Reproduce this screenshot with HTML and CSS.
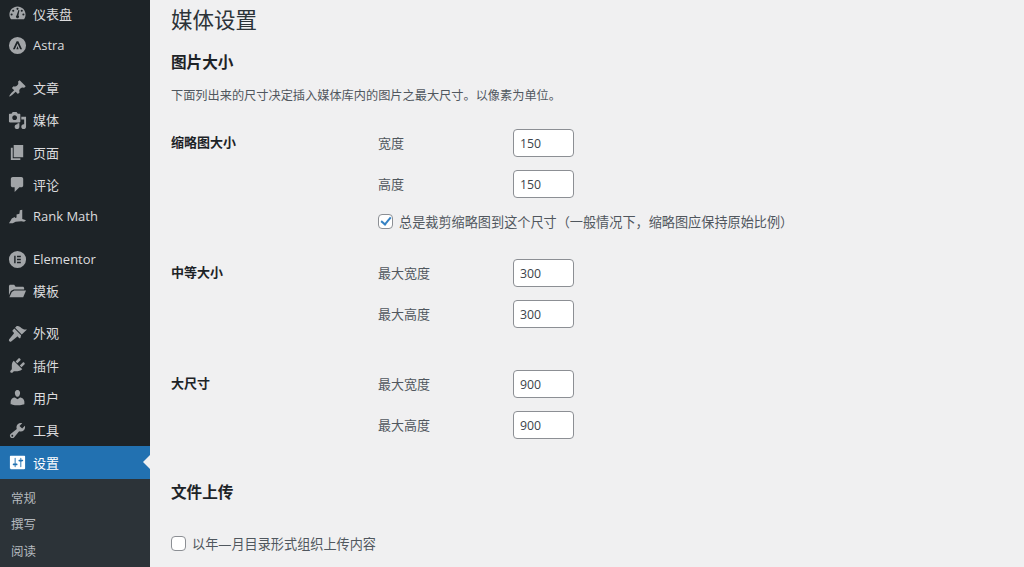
FILE: index.html
```html
<!DOCTYPE html>
<html lang="zh-CN">
<head>
    <meta charset="UTF-8">
    <title>媒体设置</title>
    <link rel="stylesheet" href="styles.css">
</head>
<body>
    <div class="sidebar">
        <ul class="menu">
            <li class="item"><svg viewBox="0 0 20 20"><path fill-rule="evenodd" d="M10 2.500C5.300 2.500 1.500 6.300 1.500 11c0 1.900.6 3.600 1.700 5h13.600c1.100-1.400 1.700-3.100 1.700-5 0-4.700-3.800-8.500-8.500-8.500zM10 4a1.100 1.100 0 1 1 0 2.200A1.100 1.100 0 0 1 10 4zM5.500 6a1.100 1.100 0 1 1 0 2.200 1.100 1.100 0 0 1 0-2.200zm9 0a1.100 1.100 0 1 1 0 2.200 1.100 1.100 0 0 1 0-2.200zM3.800 10a1.100 1.100 0 1 1 0 2.200 1.100 1.100 0 0 1 0-2.200zm12.400 0a1.100 1.100 0 1 1 0 2.200 1.100 1.100 0 0 1 0-2.200zM12 6.500l-1 5.600a1.600 1.600 0 1 1-2 0l2-5.800z"/></svg><span>仪表盘</span></li>
            <li class="item"><svg viewBox="0 0 20 20"><path fill-rule="evenodd" d="M10 1a9 9 0 1 1 0 18 9 9 0 0 1 0-18zM9.100 5.500L5.200 14h2l2.800-6 2.800 6h2L10.900 5.500zM10 10.500l-1.200 3.500h2.400z"/></svg><span>Astra</span></li>
            <li class="sep"></li>
            <li class="item"><svg viewBox="0 0 20 20"><path d="M10.440 3.020l1.820-1.820 6.360 6.350-1.830 1.820c-1.050-.68-2.480-.57-3.410.36l-.75.75c-.92.93-1.040 2.350-.35 3.410l-1.830 1.820-2.410-2.410-2.800 2.790c-.42.42-3.380 2.710-3.800 2.290s1.860-3.390 2.280-3.810l2.790-2.790L4.100 9.360l1.830-1.820c1.050.69 2.480.57 3.400-.36l.75-.75c.93-.92 1.050-2.350.36-3.410z"/></svg><span>文章</span></li>
            <li class="item"><svg viewBox="0 0 20 20"><path fill-rule="evenodd" d="M13 11V4c0-.55-.45-1-1-1h-1.670L9 1H5L3.670 3H2c-.55 0-1 .45-1 1v7c0 .55.45 1 1 1h10c.55 0 1-.45 1-1zM7 4.500c1.380 0 2.500 1.120 2.500 2.500S8.380 9.500 7 9.500 4.500 8.380 4.500 7 5.620 4.500 7 4.500zM14 6h5v10.500c0 1.380-1.120 2.500-2.500 2.500S14 17.880 14 16.500s1.120-2.500 2.500-2.500c.17 0 .34.020.5.050V9h-3V6zm-4 8.050V13h2v3.500c0 1.380-1.120 2.500-2.500 2.500S7 17.880 7 16.500 8.120 14 9.500 14c.17 0 .34.020.5.050z"/></svg><span>媒体</span></li>
            <li class="item"><svg viewBox="0 0 20 20"><path d="M6 15V2h10v13H6zm-1 1h8v2H3V5h2v11z"/></svg><span>页面</span></li>
            <li class="item"><svg viewBox="0 0 20 20"><path d="M5 2h9c1.100 0 2 .9 2 2v7c0 1.100-.9 2-2 2h-2l-5 5v-5H5c-1.100 0-2-.9-2-2V4c0-1.100.9-2 2-2z"/></svg><span>评论</span></li>
            <li class="item"><svg viewBox="0 0 20 20"><path d="M12.500 3.500l2.500-.5v9.500l4 1.500-2 1.500-3-.5-6 .5-3 1.500H1l2-3 1-2 3-1.500.5 1 1.500-.5V8l3-1z"/></svg><span>Rank Math</span></li>
            <li class="sep"></li>
            <li class="item"><svg viewBox="0 0 20 20"><path fill-rule="evenodd" d="M10 1a9 9 0 1 1 0 18 9 9 0 0 1 0-18zM6.500 6v8h1.500V6zm3 0v1.600h4V6zm0 3.200v1.600h4V9.200zm0 3.200V14h4v-1.600z"/></svg><span>Elementor</span></li>
            <li class="item"><svg viewBox="0 0 20 20"><path d="M1 4.500C1 3.700 1.700 3 2.500 3h4L8 5h7.500c.8 0 1.500.7 1.500 1.500V8H6L3 9.500 1 14zM6.500 9H19l-3 7H1.500L4 10.500z"/></svg><span>模板</span></li>
            <li class="sep"></li>
            <li class="item"><svg viewBox="0 0 20 20"><path d="M14.480 11.060L7.410 3.990l1.500-1.500c.5-.56 2.300-.47 3.510.32 1.210.8 1.430 1.280 2.910 2.100 1.180.64 2.450 1.260 4.670.85zm-.71.71L6.700 4.700 4.930 6.470c-.39.39-.39 1.020 0 1.410l1.060 1.060c.39.39.39 1.030 0 1.420l-4.500 5.500c-.7.800-.7 1.800-.1 2.400s1.600.5 2.300-.2l5.500-4.500c.39-.39 1.030-.39 1.420 0l1.060 1.060c.39.39 1.020.39 1.410 0z"/></svg><span>外观</span></li>
            <li class="item"><svg viewBox="0 0 20 20"><path d="M13.110 4.360L9.870 7.600 8 5.730l3.240-3.240c.35-.34 1.050-.2 1.560.32.52.51.66 1.210.31 1.550zm-8 1.770l.91-1.120 9.010 9.010-1.190.84c-.71.71-2.630 1.160-3.820 1.160H6.140L4.900 17.260c-.59.59-1.540.59-2.120 0-.59-.58-.59-1.530 0-2.120l1.240-1.240v-3.880c0-1.130.39-3.190 1.090-3.890zm7.260 3.970l3.240-3.240c.34-.35 1.040-.21 1.550.31.52.51.66 1.210.31 1.550l-3.240 3.250z"/></svg><span>插件</span></li>
            <li class="item"><svg viewBox="0 0 20 20"><path d="M10 9.250c-2.270 0-2.730-3.440-2.730-3.440C7 4.020 7.820 2 9.970 2c2.160 0 2.980 2.020 2.710 3.810 0 0-.41 3.440-2.680 3.440zm0 2.570L12.720 10c2.390 0 4.520 2.330 4.520 4.530v2.490s-3.650 1.130-7.240 1.130c-3.650 0-7.240-1.130-7.240-1.130v-2.490c0-2.250 1.940-4.480 4.470-4.480z"/></svg><span>用户</span></li>
            <li class="item"><svg viewBox="0 0 20 20"><path fill-rule="evenodd" d="M16.680 9.770c-1.340 1.340-3.300 1.670-4.950.99l-5.410 6.520c-.99.99-2.590.99-3.580 0s-.99-2.590 0-3.570l6.520-5.420c-.68-1.650-.35-3.610.99-4.950 1.280-1.280 3.120-1.620 4.720-1.060l-2.890 2.890 2.820 2.820 2.860-2.870c.53 1.580.18 3.400-1.080 4.650zM3.810 16.210c.4.390 1.040.39 1.430 0 .4-.4.4-1.040 0-1.430-.39-.4-1.030-.4-1.430 0-.39.39-.39 1.030 0 1.430z"/></svg><span>工具</span></li>
            <li class="item current"><svg viewBox="0 0 20 20"><path fill-rule="evenodd" d="M18 16V4c0-.55-.45-1-1-1H3c-.55 0-1 .45-1 1v12c0 .55.45 1 1 1h14c.55 0 1-.45 1-1zM8 11h1c.55 0 1 .45 1 1s-.45 1-1 1H8v1.500c0 .28-.22.5-.5.5s-.5-.22-.5-.5V13H6c-.55 0-1-.45-1-1s.45-1 1-1h1V5.500c0-.28.22-.5.5-.5s.5.220.5.5V11zm5-2h-1c-.55 0-1-.45-1-1s.45-1 1-1h1V5.500c0-.28.22-.5.5-.5s.5.220.5.5V7h1c.55 0 1 .45 1 1s-.45 1-1 1h-1v5.500c0 .28-.22.5-.5.5s-.5-.22-.5-.5V9z"/></svg><span>设置</span></li>
        </ul>
        <ul class="submenu">
            <li>常规</li>
            <li>撰写</li>
            <li>阅读</li>
        </ul>
    </div>

    <div class="content">
        <h1>媒体设置</h1>
        <h2>图片大小</h2>
        <p class="desc">下面列出来的尺寸决定插入媒体库内的图片之最大尺寸。以像素为单位。</p>

        <div class="setting thumb">
            <div class="setting-name">缩略图大小</div>
            <div>
                <label class="field"><span>宽度</span><input type="text" value="150"></label>
                <label class="field"><span>高度</span><input type="text" value="150"></label>
                <label class="check"><input type="checkbox" checked>总是裁剪缩略图到这个尺寸（一般情况下，缩略图应保持原始比例）</label>
            </div>
        </div>

        <div class="setting medium">
            <div class="setting-name">中等大小</div>
            <div>
                <label class="field"><span>最大宽度</span><input type="text" value="300"></label>
                <label class="field"><span>最大高度</span><input type="text" value="300"></label>
            </div>
        </div>

        <div class="setting large">
            <div class="setting-name">大尺寸</div>
            <div>
                <label class="field"><span>最大宽度</span><input type="text" value="900"></label>
                <label class="field"><span>最大高度</span><input type="text" value="900"></label>
            </div>
        </div>

        <h2 class="upload-title">文件上传</h2>
        <label class="check upload-check"><input type="checkbox">以年—月目录形式组织上传内容</label>
    </div>
</body>
</html>
```

FILE: styles.css
```css
html, body {
    height: 567px;
    overflow: hidden;
}
body {
    display: flex;
    margin: 0;
    background-color: #f0f0f1;
    color: #50575e;
    font-family: "Open Sans", "Noto Sans CJK SC", sans-serif;
    font-size: 13px;
}
ul {
    list-style: none;
    margin: 0;
    padding: 0;
}
.sidebar {
    width: 150px;
    flex-shrink: 0;
    background-color: #1d2327;
    color: #dcdcde;
}
.menu {
    margin-top: -2.3px;
}
.item {
    display: flex;
    align-items: center;
    gap: 6px;
    height: 32.2px;
    padding-left: 8px;
    position: relative;
}
.item span {
    padding-bottom: 1px;
}
.item svg {
    width: 19px;
    height: 19px;
    fill: #a2a5a8;
}
.sep {
    height: 10px;
}
.current {
    height: 33px;
    background-color: #2271b1;
    color: #fff;
}
.current svg {
    fill: #fff;
}
.current::after {
    content: "";
    position: absolute;
    right: 0;
    top: 9px;
    border: 7px solid transparent;
    border-left-width: 0;
    border-right-color: #f0f0f1;
}
.submenu {
    background-color: #2c3338;
    color: #b4b9be;
    padding-top: 7px;
    height: 90px;
    font-size: 12.5px;
}
.submenu li {
    height: 26.2px;
    line-height: 26.2px;
    padding-left: 11px;
}
.content {
    flex: 1;
    padding-left: 21px;
}
h1 {
    margin: 5px 0 0;
    color: #2c3338;
    font-size: 21.5px;
    font-weight: 400;
    line-height: 30px;
}
h2 {
    margin: 12px 0 0;
    color: #1d2327;
    font-size: 15.6px;
    font-weight: 700;
    line-height: 30px;
}
.desc {
    margin: 10px 0 0;
    font-size: 12.2px;
    line-height: 18px;
}
.setting {
    display: grid;
    grid-template-columns: 207px 1fr;
}
.setting-name {
    color: #1d2327;
    font-weight: 700;
    line-height: 18px;
    padding-top: 11px;
}
.thumb {
    margin-top: 17px;
}
.medium {
    margin-top: 22px;
}
.large {
    margin-top: 29px;
}
.field {
    display: flex;
    align-items: center;
    height: 41px;
}
.field span {
    width: 135px;
}
.field input {
    box-sizing: border-box;
    width: 61px;
    height: 28px;
    margin-top: 1px;
    padding: 0 6px;
    border: 1px solid #8c8f94;
    border-radius: 4px;
    background-color: #fff;
    color: #3c434a;
    font-family: inherit;
    font-size: 12.3px;
}
.check {
    display: flex;
    align-items: center;
    gap: 6px;
    height: 18px;
    margin-top: 8px;
    font-size: 13.15px;
}
.check input {
    appearance: none;
    position: relative;
    width: 15px;
    height: 15px;
    margin: 0;
    border: 1px solid #8c8f94;
    border-radius: 4px;
    background-color: #fff;
}
.check input:checked::before {
    content: "";
    position: absolute;
    left: 3.5px;
    top: 0.5px;
    width: 4px;
    height: 8px;
    border: solid #3582c4;
    border-width: 0 2.2px 2.2px 0;
    transform: rotate(40deg);
}
.upload-title {
    margin-top: 32px;
}
.upload-check {
    margin-top: 27px;
}
```
